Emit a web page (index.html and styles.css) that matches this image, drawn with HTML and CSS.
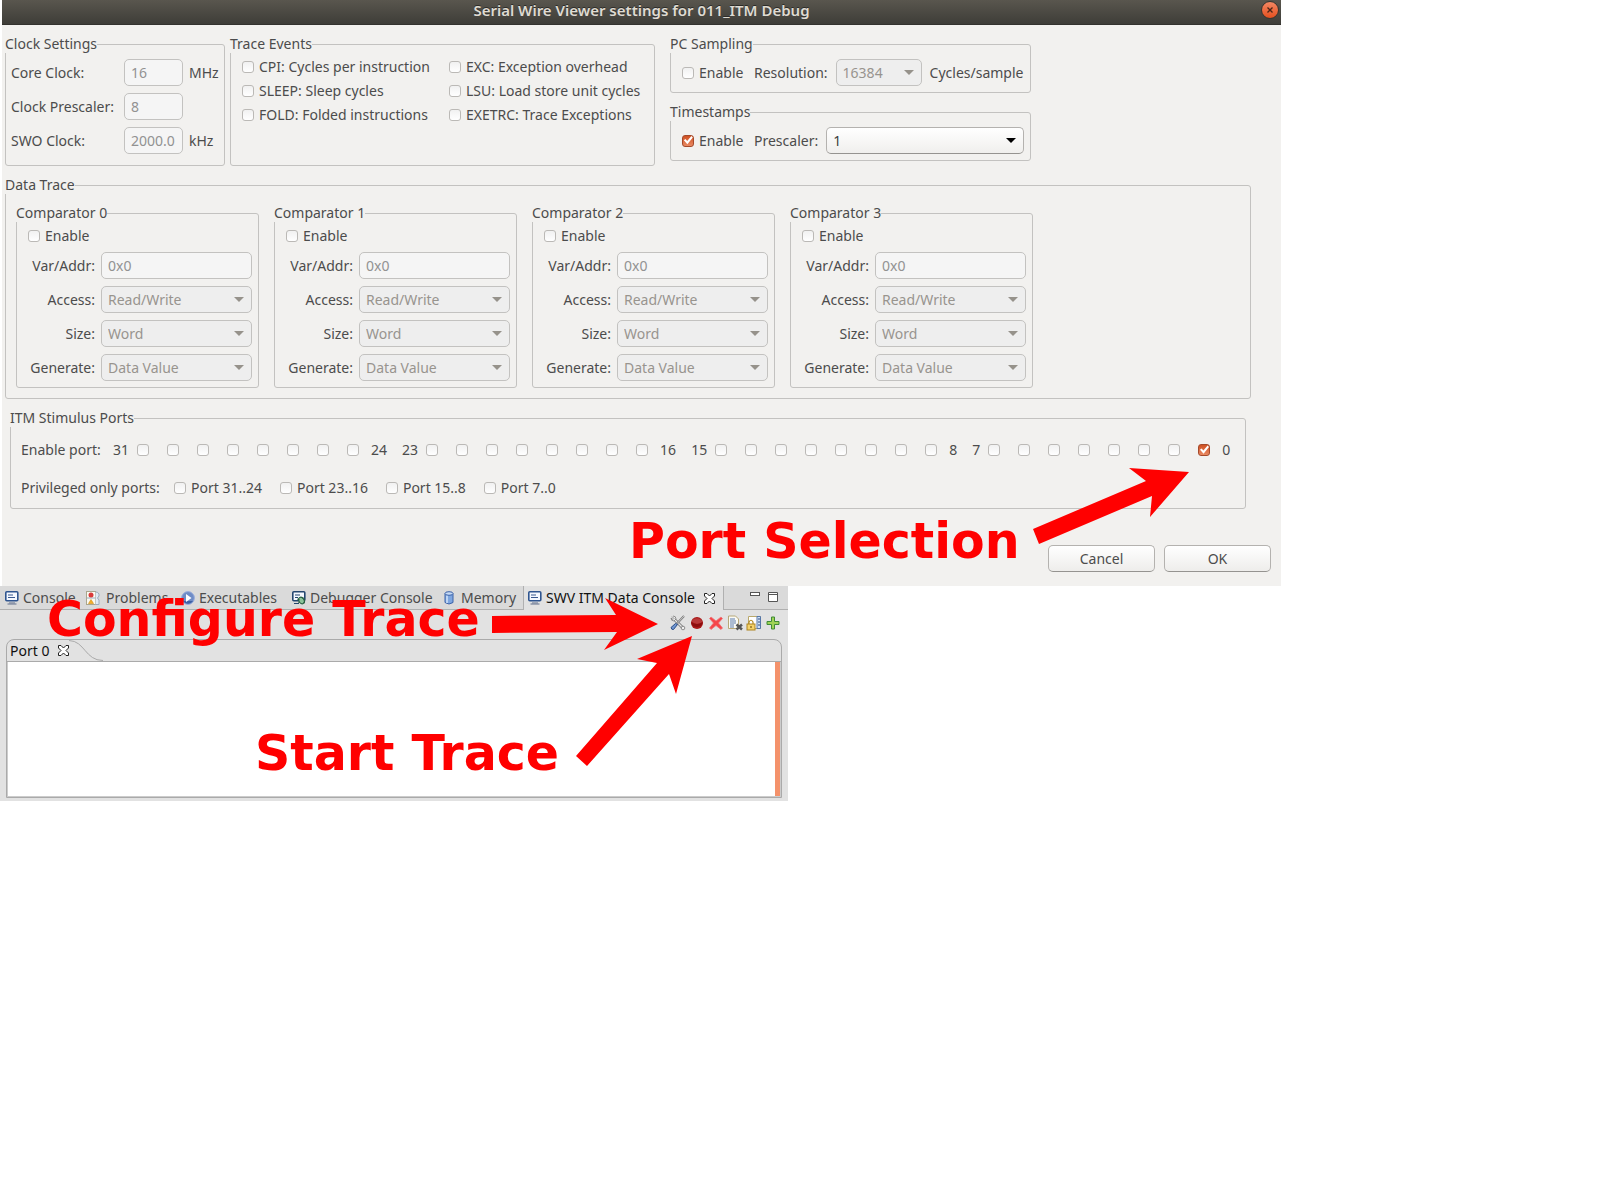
FILE: index.html
```html
<!DOCTYPE html>
<html lang="en">
<head>
<meta charset="utf-8">
<title>Serial Wire Viewer settings for 011_ITM Debug</title>
<link rel="stylesheet" href="styles.css">
</head>
<body>
<main class="page">
<section class="dialog" aria-labelledby="dialog-title">
  <header class="titlebar">
    <h1 id="dialog-title">Serial Wire Viewer settings for 011_ITM Debug</h1>
    <button class="close" type="button" aria-label="Close">
      <svg viewBox="0 0 16 16" width="16" height="16"><path d="M5.5 5.500l5 5M10.500 5.500l-5 5" stroke="#4a2416" stroke-width="1.300" fill="none"/></svg>
    </button>
  </header>
  <form class="dialog-body">
    <div class="top-row">
      <fieldset class="group">
        <legend>Clock Settings</legend>
        <div class="clock-grid">
          <label for="core">Core Clock:</label><input class="field" id="core" type="text" value="16" disabled><span>MHz</span>
          <label for="cpre">Clock Prescaler:</label><input class="field" id="cpre" type="text" value="8" disabled><span></span>
          <label for="swo">SWO Clock:</label><input class="field" id="swo" type="text" value="2000.0" disabled><span>kHz</span>
        </div>
      </fieldset>
      <fieldset class="group">
        <legend>Trace Events</legend>
        <div class="events-grid">
          <label class="check"><input type="checkbox">CPI: Cycles per instruction</label>
          <label class="check"><input type="checkbox">EXC: Exception overhead</label>
          <label class="check"><input type="checkbox">SLEEP: Sleep cycles</label>
          <label class="check"><input type="checkbox">LSU: Load store unit cycles</label>
          <label class="check"><input type="checkbox">FOLD: Folded instructions</label>
          <label class="check"><input type="checkbox">EXETRC: Trace Exceptions</label>
        </div>
      </fieldset>
      <div class="timing">
        <fieldset class="group">
          <legend>PC Sampling</legend>
          <div class="timing-row">
            <label class="check"><input type="checkbox">Enable</label>
            <label for="res">Resolution:</label>
            <span class="combo combo-small"><select id="res" disabled><option>16384</option></select></span>
            <span>Cycles/sample</span>
          </div>
        </fieldset>
        <fieldset class="group">
          <legend>Timestamps</legend>
          <div class="timing-row">
            <label class="check"><input type="checkbox" checked>Enable</label>
            <label for="tpre">Prescaler:</label>
            <span class="combo combo-fill"><select id="tpre"><option>1</option></select></span>
          </div>
        </fieldset>
      </div>
    </div>

    <fieldset class="group data-trace">
      <legend>Data Trace</legend>
      <div class="comparators">
        <fieldset class="group">
          <legend>Comparator 0</legend>
          <div class="comparator">
            <label class="check"><input type="checkbox">Enable</label>
            <label for="a0">Var/Addr:</label><input class="field" id="a0" type="text" value="0x0" disabled>
            <label for="b0">Access:</label><span class="combo"><select id="b0" disabled><option>Read/Write</option></select></span>
            <label for="c0">Size:</label><span class="combo"><select id="c0" disabled><option>Word</option></select></span>
            <label for="d0">Generate:</label><span class="combo"><select id="d0" disabled><option>Data Value</option></select></span>
          </div>
        </fieldset>
        <fieldset class="group">
          <legend>Comparator 1</legend>
          <div class="comparator">
            <label class="check"><input type="checkbox">Enable</label>
            <label for="a1">Var/Addr:</label><input class="field" id="a1" type="text" value="0x0" disabled>
            <label for="b1">Access:</label><span class="combo"><select id="b1" disabled><option>Read/Write</option></select></span>
            <label for="c1">Size:</label><span class="combo"><select id="c1" disabled><option>Word</option></select></span>
            <label for="d1">Generate:</label><span class="combo"><select id="d1" disabled><option>Data Value</option></select></span>
          </div>
        </fieldset>
        <fieldset class="group">
          <legend>Comparator 2</legend>
          <div class="comparator">
            <label class="check"><input type="checkbox">Enable</label>
            <label for="a2">Var/Addr:</label><input class="field" id="a2" type="text" value="0x0" disabled>
            <label for="b2">Access:</label><span class="combo"><select id="b2" disabled><option>Read/Write</option></select></span>
            <label for="c2">Size:</label><span class="combo"><select id="c2" disabled><option>Word</option></select></span>
            <label for="d2">Generate:</label><span class="combo"><select id="d2" disabled><option>Data Value</option></select></span>
          </div>
        </fieldset>
        <fieldset class="group">
          <legend>Comparator 3</legend>
          <div class="comparator">
            <label class="check"><input type="checkbox">Enable</label>
            <label for="a3">Var/Addr:</label><input class="field" id="a3" type="text" value="0x0" disabled>
            <label for="b3">Access:</label><span class="combo"><select id="b3" disabled><option>Read/Write</option></select></span>
            <label for="c3">Size:</label><span class="combo"><select id="c3" disabled><option>Word</option></select></span>
            <label for="d3">Generate:</label><span class="combo"><select id="d3" disabled><option>Data Value</option></select></span>
          </div>
        </fieldset>
      </div>
    </fieldset>

    <fieldset class="group ports">
      <legend>ITM Stimulus Ports</legend>
      <div class="port-rows">
        <div class="port-row">
          <span class="enable-label">Enable port:</span>
          <div class="port-bank"><span>31</span>
            <div class="boxes"><input type="checkbox" aria-label="Port 31"><input type="checkbox" aria-label="Port 30"><input type="checkbox" aria-label="Port 29"><input type="checkbox" aria-label="Port 28"><input type="checkbox" aria-label="Port 27"><input type="checkbox" aria-label="Port 26"><input type="checkbox" aria-label="Port 25"><input type="checkbox" aria-label="Port 24"></div>
            <span>24</span></div>
          <div class="port-bank"><span>23</span>
            <div class="boxes"><input type="checkbox" aria-label="Port 23"><input type="checkbox" aria-label="Port 22"><input type="checkbox" aria-label="Port 21"><input type="checkbox" aria-label="Port 20"><input type="checkbox" aria-label="Port 19"><input type="checkbox" aria-label="Port 18"><input type="checkbox" aria-label="Port 17"><input type="checkbox" aria-label="Port 16"></div>
            <span>16</span></div>
          <div class="port-bank"><span>15</span>
            <div class="boxes"><input type="checkbox" aria-label="Port 15"><input type="checkbox" aria-label="Port 14"><input type="checkbox" aria-label="Port 13"><input type="checkbox" aria-label="Port 12"><input type="checkbox" aria-label="Port 11"><input type="checkbox" aria-label="Port 10"><input type="checkbox" aria-label="Port 9"><input type="checkbox" aria-label="Port 8"></div>
            <span>8</span></div>
          <div class="port-bank"><span>7</span>
            <div class="boxes"><input type="checkbox" aria-label="Port 7"><input type="checkbox" aria-label="Port 6"><input type="checkbox" aria-label="Port 5"><input type="checkbox" aria-label="Port 4"><input type="checkbox" aria-label="Port 3"><input type="checkbox" aria-label="Port 2"><input type="checkbox" aria-label="Port 1"><input type="checkbox" aria-label="Port 0" checked></div>
            <span>0</span></div>
        </div>
        <div class="privileged-row">
          <span>Privileged only ports:</span>
          <label class="check"><input type="checkbox">Port 31..24</label>
          <label class="check"><input type="checkbox">Port 23..16</label>
          <label class="check"><input type="checkbox">Port 15..8</label>
          <label class="check"><input type="checkbox">Port 7..0</label>
        </div>
      </div>
    </fieldset>

    <div class="actions">
      <button class="push" type="button">Cancel</button>
      <button class="push" type="button">OK</button>
    </div>
  </form>
</section>

<section class="console" aria-label="SWV ITM Data Console">
  <nav class="tabs">
    <button class="tab w-console" type="button">
      <svg viewBox="0 0 14 14" width="14" height="14"><rect x=".8" y=".8" width="12" height="9" rx="1" fill="#f4f8ff" stroke="#2f5590" stroke-width="1.600"/><path d="M3 4h5M3 6.500h7" stroke="#39588f"/><path d="M4 12h6M2.500 13h9" stroke="#8a94a8" stroke-width="1.500"/></svg>Console</button>
    <button class="tab w-problems" type="button">
      <svg viewBox="0 0 14 14" width="14" height="14"><rect x=".5" y=".5" width="9" height="13" fill="#fbfaf2" stroke="#aaa68d"/><path d="M.5 7h9M9.500 1q4 0 3.500 4l-1.500 2 1.500 2v4.500H9.500" fill="#dfeaf5" stroke="#9aabbd"/><circle cx="5" cy="4" r="2.500" fill="#d93a3a"/><path d="M5 8.500l2.500 4h-5z" fill="#f3b12c" stroke="#d08a10" stroke-width=".6"/></svg>Problems</button>
    <button class="tab w-executables" type="button">
      <svg viewBox="0 0 14 14" width="14" height="14"><circle cx="7" cy="7" r="6.400" fill="#6f8cc6" stroke="#9aaede"/><path d="M2 10a6 6 0 0 0 10 0" fill="#3f62a6"/><path d="M5 3l5.500 4L5 11z" fill="#fff"/></svg>Executables</button>
    <button class="tab w-debugger" type="button">
      <svg viewBox="0 0 14 14" width="14" height="14"><rect x=".8" y=".8" width="12" height="9" rx="1" fill="#f4f8ff" stroke="#24466f" stroke-width="1.600"/><path d="M3 4h5M3 6.500h3M2 12.500h5" stroke="#24466f"/><ellipse cx="9.500" cy="9.500" rx="2.600" ry="3.500" transform="rotate(-35 9.500 9.500)" fill="#8cc49a" stroke="#245c40"/><path d="M5 8l3 1M6 12l2-1M11 6l0 2M13 8l-2 1M13 12l-2-1" stroke="#245c40" stroke-width=".8"/></svg>Debugger Console</button>
    <button class="tab w-memory" type="button">
      <svg viewBox="0 0 10 14" width="10" height="14"><path d="M1 2.500v9q4 3 8 0v-9" fill="#7ea6e0" stroke="#3c62a8"/><path d="M3 4v8" stroke="#d5e4fb" stroke-width="1.500"/><ellipse cx="5" cy="2.500" rx="4" ry="1.800" fill="#c5daf6" stroke="#3c62a8"/></svg>Memory</button>
    <button class="tab tab-active" type="button">
      <svg viewBox="0 0 14 14" width="14" height="14"><rect x=".8" y=".8" width="12" height="9" rx="1" fill="#f4f8ff" stroke="#2f5590" stroke-width="1.600"/><path d="M3 4h5M3 6.500h7" stroke="#39588f"/><path d="M4 12h6M2.500 13h9" stroke="#8a94a8" stroke-width="1.500"/></svg>SWV ITM Data Console
      <svg class="tab-x" viewBox="0 0 11 11" width="11" height="11"><path d="M.5.500h2.500l2.500 2.500L8 .500h2.500V3L8 5.500 10.500 8v2.500H8L5.500 8 3 10.500H.500V8L3 5.500.500 3z" fill="#fff" stroke="#222"/></svg></button>
    <div class="window-tools">
      <button type="button" aria-label="Minimize"><svg viewBox="0 0 11 11" width="11" height="11"><rect x=".5" y=".5" width="9" height="3" fill="#fff" stroke="#555"/></svg></button>
      <button type="button" aria-label="Maximize"><svg viewBox="0 0 11 11" width="11" height="11"><path d="M.5.500h9v9h-9zM.5 2.500h9" fill="#fff" stroke="#555"/></svg></button>
    </div>
  </nav>
  <div class="toolbar">
    <button type="button" aria-label="Configure trace"><svg viewBox="0 0 16 16" width="16" height="16"><path d="M4.500 4.500l8 8" stroke="#777" stroke-width="3"/><path d="M4.500 4.500l8 8" stroke="#e8e8e8" stroke-width="1.200"/><path d="M2 1.500l2 2-1 1-2-1.500Q1 6 4 6l2-2Q6 1 3 1" fill="#eee" stroke="#777" stroke-width=".8"/><path d="M14 1L7 8.500" stroke="#777" stroke-width="2"/><path d="M14 1L7 8.500" stroke="#ddd" stroke-width=".8"/><path d="M7.500 9.500l-4 5q-2 .5-2.500-2l4.500-4z" fill="#7196d0" stroke="#294c86"/><circle cx="13" cy="13" r="1.800" fill="#eee" stroke="#777" stroke-width=".8"/></svg></button>
    <button type="button" aria-label="Start trace"><svg viewBox="0 0 16 16" width="16" height="16"><circle cx="8" cy="8" r="6" fill="#a81818"/><path d="M2.500 6.500Q8 11 13.500 7A6 6 0 0 0 2.500 6.500" fill="#b83838"/><path d="M2.200 7q5 4 11.600 0a6 6 0 0 1-11.600 1" fill="#8d0d0d"/></svg></button>
    <button type="button" aria-label="Remove"><svg viewBox="0 0 16 16" width="16" height="16"><path d="M3 2l5 4 5-4 1.500 1.500L10.500 8l4 5L13 14.500 8 10.500l-5 4L1.500 13l4-5-4-4.500z" fill="#f5464a" stroke="#ee7275" stroke-width=".8"/></svg></button>
    <button type="button" aria-label="Clear console"><svg viewBox="0 0 16 16" width="16" height="16"><path d="M1.500 1h7l3 3v9.500h-10z" fill="#fafaf5" stroke="#b7a878"/><path d="M3 4h5M3 6h6M3 8h6M3 10h4M3 12h4" stroke="#5d7cae"/><path d="M9.500 9.500l5.500 5M15 9.500l-5.500 5" stroke="#555" stroke-width="2.400"/></svg></button>
    <button type="button" aria-label="Scroll lock"><svg viewBox="0 0 16 16" width="16" height="16"><path d="M2.500 1.500h12v12h-12z" fill="#fff" stroke="#b9a86c"/><path d="M11 1.500h3.500v12H11z" fill="#cfe0f6" stroke="#5677a8"/><path d="M12 4h2M12 7h2M12 10h2" stroke="#33507e"/><path d="M3 9V7q2-3.500 4 0v2" fill="none" stroke="#b58b22" stroke-width="1.200"/><rect x="1" y="9" width="8" height="6" fill="#f5d26a" stroke="#ad8420"/><path d="M5 11v2" stroke="#5d4100"/></svg></button>
    <button type="button" aria-label="Add port"><svg viewBox="0 0 16 16" width="16" height="16"><path d="M6.500 2h3v4.500H14v3H9.500V14h-3V9.500H2v-3h4.500z" fill="#9fd355" stroke="#3f8a36"/></svg></button>
  </div>
  <div class="folder">
    <div class="folder-head">
      <button class="port-tab" type="button">Port 0
        <svg viewBox="0 0 11 11" width="11" height="11"><path d="M.5.500h2.500l2.500 2.500L8 .500h2.500V3L8 5.500 10.500 8v2.500H8L5.500 8 3 10.500H.500V8L3 5.500.500 3z" fill="#fff" stroke="#222"/></svg></button>
      <svg class="curve" viewBox="0 0 36 21" width="36" height="21"><path d="M0 .5C16 1 16 20.500 34 20.500" fill="none" stroke="#aaa"/></svg>
    </div>
    <div class="output"></div>
  </div>
</section>

<div class="notes">
  <svg class="arrows" viewBox="0 0 1300 810" width="1300" height="810" fill="#f00" aria-hidden="true">
    <path d="M1033 529L1146 481 1129 468 1189 472 1150 517 1152 496 1039 544z"/>
    <path d="M492 616L616 615 605 598 658 624 604 650 617 632 492 633z"/>
    <path d="M576 756L657 663 637 659 692 636 676 694 669 674 587 766z"/>
  </svg>
  <span class="note note-port">Port Selection</span>
  <span class="note note-configure">Configure Trace</span>
  <span class="note note-start">Start Trace</span>
</div>
</main>
</body>
</html>
```
FILE: styles.css
```css
* { box-sizing: border-box; }

body {
  margin: 0;
  background: #fff;
  color: #4c4c4c;
  font: 14px/18px "Noto Sans", sans-serif;
}

button, input, select { font: inherit; color: inherit; margin: 0; }
svg { display: block; flex: none; }
label, legend, span, button { white-space: nowrap; }

.page { position: relative; }

/* Dialog window */
.dialog {
  width: calc(80% - 1px);
  min-width: 1278px;
  margin-left: 2px;
  background: #f2f1ef;
}

.titlebar {
  display: grid;
  grid-template-columns: 24px 1fr 24px;
  height: 25px;
  background: linear-gradient(#59564e, #3e3d38);
  border-bottom: 1px solid #33322e;
}

.titlebar h1 {
  grid-column: 2;
  margin: 0;
  color: #dfdbd2;
  font-size: 15px;
  font-weight: 600;
  line-height: 20px;
  text-align: center;
  text-shadow: 0 -1px #2c2b28;
}

.close {
  width: 18px;
  height: 18px;
  margin: 1px 4px;
  padding: 0;
  border: 1px solid #37352f;
  border-radius: 50%;
  background: linear-gradient(#f38763, #e4501f);
}

.dialog-body { padding: 10px 10px 14px 3px; }

/* Framed groups */
.group {
  min-width: 0;
  margin: 0;
  padding: 0;
  border: 1px solid #c3c2c0;
  border-radius: 3px;
}

.group > legend {
  margin-left: -1px;
  padding: 0;
  background: #f2f1ef;
  line-height: 18px;
}

.top-row { display: flex; align-items: stretch; }
.top-row > .group { margin-right: 5px; }
.top-row > .group:nth-child(2) { margin-right: 15px; }

.clock-grid {
  display: grid;
  grid-template-columns: 107px 59px auto;
  gap: 7px 6px;
  align-items: center;
  width: 218px;
  padding: 6px 5px 11px;
}

.events-grid {
  display: grid;
  grid-template-columns: 207px auto;
  grid-auto-rows: 24px;
  width: 423px;
  padding: 2px 0 0 11px;
}

.timing { display: grid; gap: 10px; align-content: start; width: 361px; }
.timing-row { display: flex; align-items: center; gap: 8px; padding: 6px 6px 6px 11px; }
.timing-row .check { width: 64px; }

.data-trace { margin: 10px 20px 0 0; }
.comparators { display: flex; gap: 15px; padding: 10px; }

.comparator {
  display: grid;
  grid-template-columns: 74px 151px;
  gap: 7px 6px;
  align-items: center;
  padding: 4px 6px 6px 4px;
}

.comparator > label { text-align: right; }
.comparator > .check { grid-column: 1 / -1; height: 19px; padding-left: 7px; }

/* Form controls */
.check { display: flex; align-items: center; gap: 5px; }

input[type="checkbox"] {
  appearance: none;
  flex: none;
  display: grid;
  width: 12px;
  height: 12px;
  border: 1px solid #bbb9b6;
  border-radius: 3px;
  background: linear-gradient(#f1f1f1, #fff);
}

input[type="checkbox"]:checked { border-color: #a5492a; background: linear-gradient(#cf5123, #e98a63); }

input[type="checkbox"]:checked::before {
  content: "";
  background: #fff;
  clip-path: polygon(8% 48%, 24% 34%, 42% 56%, 84% 6%, 98% 20%, 44% 88%);
}

.field, .combo select {
  display: block;
  width: 100%;
  height: 27px;
  padding: 0 6px;
  border: 1px solid #c3c2c0;
  border-radius: 5px;
  background: #f5f5f5;
  color: #929292;
  opacity: 1;
}

.combo { position: relative; display: block; }
.combo select { appearance: none; background: #eee; color: #98948e; }

.combo select:enabled {
  border-color: #b4b2af #b4b2af #959390;
  background: linear-gradient(#fff, #f0efed);
  color: #3c3c3c;
}

.combo::after {
  content: "";
  position: absolute;
  right: 8px;
  top: 11px;
  border: 5px solid transparent;
  border-top-color: #96928b;
  border-bottom: 0;
  pointer-events: none;
}

.combo-small { width: 86px; }
.combo-fill { flex: 1; }
.combo-fill::after { border-top-color: #000; }

/* Stimulus ports */
.ports { margin: 10px 25px 0 5px; }
.port-rows { display: grid; gap: 14px; padding: 11px 10px 8px; }
.port-row { display: flex; align-items: center; height: 24px; gap: 15px; }
.enable-label { width: 77px; }
.port-bank { display: flex; align-items: center; gap: 8px; }
.boxes { display: flex; gap: 18px; margin-right: 4px; }
.privileged-row { display: flex; align-items: center; height: 24px; gap: 18px; }
.privileged-row > span { width: 135px; }

.actions { display: flex; justify-content: flex-end; gap: 9px; margin-top: 36px; }

.push {
  width: 107px;
  height: 27px;
  padding: 0;
  border: 1px solid #b4b2af;
  border-bottom-color: #959390;
  border-radius: 5px;
  background: linear-gradient(#fff, #eeedeb);
}

/* Console panel */
.console {
  width: 49.25%;
  min-width: 788px;
  padding-bottom: 3px;
  background: #e2e2e2;
}

.tabs { display: flex; height: 24px; background: #dadada; box-shadow: inset 0 -1px #b0b0b0; }

.tab {
  display: flex;
  align-items: center;
  gap: 4px;
  flex: none;
  padding: 0 0 0 5px;
  border: 0;
  background: none;
}

.w-console { width: 81px; }
.w-problems { width: 95px; gap: 6px; }
.w-executables { width: 111px; }
.w-debugger { width: 152px; }
.w-memory { width: 84px; gap: 7px; }

.tab-active {
  width: 201px;
  padding-left: 4px;
  border: 1px solid #b0b0b0;
  border-width: 0 1px;
  background: #e2e2e2;
  color: #111;
}

.tab-x { margin-left: 5px; }

.window-tools { display: flex; gap: 7px; margin: 6px 9px 0 auto; }
.window-tools button, .toolbar button { height: auto; padding: 0; border: 0; background: none; }
.window-tools button { display: flex; align-items: flex-start; }

.toolbar { display: flex; justify-content: flex-end; gap: 3px; padding: 5px 7px 8px; }

.folder { margin: 0 6px; border: 1px solid #aaa; border-radius: 8px 8px 0 0; }
.folder-head { display: flex; height: 22px; border-bottom: 1px solid #aaa; }

.port-tab {
  display: flex;
  align-items: center;
  gap: 9px;
  padding: 0 0 0 3px;
  border: 0;
  background: none;
  color: #111;
}

.output { height: 135px; border: 1px solid #ccc; border-width: 0 1px 1px; background: linear-gradient(to left, #f4926b 5px, #fff 5px); }

/* Callouts laid over both windows */
.notes { position: absolute; inset: 0; pointer-events: none; }
.arrows { position: absolute; left: 0; top: 0; }

.note {
  position: absolute;
  color: #f00;
  font: 700 49px/56px "DejaVu Sans", sans-serif;
}

.note-port { left: 629px; top: 514px; }
.note-configure { left: 47px; top: 592px; }
.note-start { left: 255px; top: 726px; }
```
